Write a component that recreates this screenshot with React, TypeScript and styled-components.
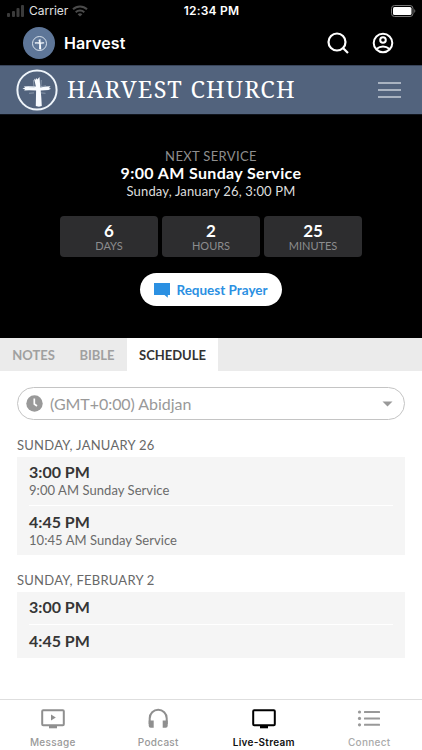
import React from "react";
import styled, { createGlobalStyle } from "styled-components";

const Global = createGlobalStyle`
  * { box-sizing: border-box; }
  body { margin: 0; background: #fff; }
  button { font: inherit; border: 0; margin: 0; padding: 0; background: none; color: inherit; }
  svg { display: block; flex: none; }
`;

type TextProps = {
  $size: number;
  $line: number;
  $color: string;
  $weight?: number;
  $track?: number;
  $system?: boolean;
};

const Text = styled.span<TextProps>`
  display: block;
  white-space: nowrap;
  font-family: ${(p) => (p.$system ? '"Inter"' : '"Lato"')}, "Liberation Sans", sans-serif;
  font-size: ${(p) => p.$size}px;
  line-height: ${(p) => p.$line}px;
  font-weight: ${(p) => p.$weight ?? 400};
  letter-spacing: ${(p) => p.$track ?? 0}px;
  color: ${(p) => p.$color};
`;

const Screen = styled.div`
  width: 422px;
  height: 750px;
  display: flex;
  flex-direction: column;
  overflow: hidden;
  background: #fff;
`;

const StatusBar = styled.div`
  height: 22px;
  flex: none;
  display: grid;
  grid-template-columns: 1fr auto 1fr;
  align-items: center;
  padding: 0 6px 0 7px;
  background: #000;
`;

const Carrier = styled.div`
  display: flex;
  align-items: center;
  gap: 4px;
`;

const BatteryBox = styled.div`
  justify-self: end;
`;

const AppBar = styled.header`
  height: 43px;
  flex: none;
  display: flex;
  align-items: center;
  padding: 0 28px 1px 23px;
  background: #000;
`;

const Avatar = styled.div`
  width: 32px;
  height: 32px;
  margin-right: 9px;
  border-radius: 50%;
  display: grid;
  place-items: center;
  background: #5e7698;
`;

const Actions = styled.div`
  display: flex;
  align-items: center;
  gap: 23px;
  margin-left: auto;
`;

const Banner = styled.div`
  height: 50px;
  flex: none;
  display: flex;
  align-items: center;
  padding: 0 21px 0 16px;
  border-top: 1px solid #38445a;
  border-bottom: 1px solid #10141c;
  background: #52637d;
`;

const ChurchName = styled.div`
  margin-left: 9px;
  padding-bottom: 2px;
  flex: 1;
  font-family: "Noto Serif", "Liberation Serif", serif;
  font-size: 23.5px;
  line-height: 46px;
  letter-spacing: 1.27px;
  white-space: nowrap;
  color: #fff;
`;

const Hero = styled.section`
  height: 223px;
  flex: none;
  display: flex;
  flex-direction: column;
  align-items: center;
  padding-top: 32px;
  background: #000;
`;

const Countdown = styled.div`
  display: grid;
  grid-template-columns: repeat(3, 98px);
  gap: 4px;
  margin: 14px 0 16px;
`;

const Cell = styled.div`
  height: 41px;
  padding-top: 5px;
  border-radius: 4px;
  text-align: center;
  background: #2d2d2f;
`;

const PrayerButton = styled.button`
  width: 142px;
  height: 33px;
  border-radius: 17px;
  display: flex;
  align-items: center;
  justify-content: center;
  gap: 6px;
  background: #fff;
`;

const Tabs = styled.nav`
  height: 33px;
  flex: none;
  display: flex;
  background: #ebebeb;
`;

const Tab = styled.button<{ $width: number; $active?: boolean }>`
  width: ${(p) => p.$width}px;
  padding-top: 2px;
  display: flex;
  justify-content: center;
  align-items: center;
  background: ${(p) => (p.$active ? "#fff" : "transparent")};
`;

const Content = styled.main`
  flex: 1;
  padding: 16px 17px 0;
`;

const ZoneSelect = styled.div`
  height: 33px;
  display: flex;
  align-items: center;
  gap: 7px;
  padding: 0 11px 0 8px;
  border: 1px solid #c4c4c4;
  border-radius: 17px;
  margin-bottom: 17px;
`;

const Caret = styled.svg`
  margin-left: auto;
`;

const Day = styled.section`
  margin-bottom: 17px;
`;

const Slots = styled.div`
  margin-top: 3px;
  padding: 0 12px;
  background: #f5f5f5;
`;

const Slot = styled.div<{ $height: number }>`
  height: ${(p) => p.$height}px;
  padding-top: 5px;
  & + & {
    padding-top: 6px;
    border-top: 1px solid #fff;
  }
`;

const TabBar = styled.nav`
  height: 51px;
  flex: none;
  display: grid;
  grid-template-columns: repeat(4, 1fr);
  border-top: 1px solid #dedede;
`;

const TabItem = styled.button`
  display: flex;
  flex-direction: column;
  align-items: center;
  padding-top: 6px;
  gap: 3px;
`;

function Cross({ size, ring = 2 }: { size: number; ring?: number }) {
  return (
    <svg width={size} height={size} viewBox="0 0 42 42" fill="none">
      <circle cx="21" cy="21" r="19.6" stroke="#eef4fa" strokeWidth={ring} />
      <path d="M18 9.500l1.300 1.500.9-2 1 1.500 2.300-2.500.8 10.500 5.500-1 4.700-.3-1.500 1.800 2 .8-2.500 1.200-7.800.5.600 7 .5 8.400-2.800.8-3.200-.8.300-15.400-7-.2-5 .3 1-1.200-2.600-.8 2.700-1.200-1.500-.8 4.700-.3 7.500.3z" fill="#f8fbff" />
      <path d="M17.400 11l.6 7.500M25.300 11l-.5 7M13 18l5.500.6M25 17.600l5-.8M13 24.300l5-.4M25 23.900l4.500.4" stroke="#c4d0de" strokeWidth=".8" opacity=".6" />
    </svg>
  );
}

function Monitor({ color, play }: { color: string; play?: boolean }) {
  return (
    <svg width="26" height="26" viewBox="0 0 26 26" fill="none">
      <rect x="2.200" y="4.200" width="21.600" height="15" rx="1" stroke={color} strokeWidth="2" />
      <path d="M9 20h8v2.300H9z" fill={color} />
      {play && <path d="M11 8.600v6l4.800-3z" fill={color} />}
    </svg>
  );
}

function Headphones() {
  return (
    <svg width="26" height="26" viewBox="0 0 26 26" fill="none">
      <path d="M4.700 18v-5.700a8.500 8.500 0 0 1 17 0V18" stroke="#8f8f8f" strokeWidth="2" />
      <path d="M3.700 14.500h5v7.300h-3a2 2 0 0 1-2-2zM22.700 14.500h-5v7.300h3a2 2 0 0 0 2-2z" fill="#8f8f8f" />
    </svg>
  );
}

function ListIcon() {
  return (
    <svg width="26" height="26" viewBox="0 0 26 26">
      {[6, 12.4, 18.8].map((y) => (
        <g key={y} fill="#999">
          <circle cx="3.500" cy={y} r="1.600" />
          <rect x="8" y={y - 1} width="16" height="2" rx=".5" />
        </g>
      ))}
    </svg>
  );
}

const countdown = [
  ["6", "DAYS"],
  ["2", "HOURS"],
  ["25", "MINUTES"],
];

type SlotData = { time: string; name?: string; height: number };

const days: { date: string; slots: SlotData[] }[] = [
  {
    date: "SUNDAY, JANUARY 26",
    slots: [
      { time: "3:00 PM", name: "9:00 AM Sunday Service", height: 48 },
      { time: "4:45 PM", name: "10:45 AM Sunday Service", height: 50 },
    ],
  },
  {
    date: "SUNDAY, FEBRUARY 2",
    slots: [
      { time: "3:00 PM", height: 32 },
      { time: "4:45 PM", height: 34 },
    ],
  },
];

export default function App() {
  return (
    <Screen>
      <Global />
      <StatusBar>
        <Carrier>
          <svg width="18" height="12" viewBox="0 0 18 12" fill="#3b3b3b">
            <rect y="8" width="3" height="4" rx="1" />
            <rect x="5" y="6" width="3" height="6" rx="1" />
            <rect x="9.500" y="3" width="3" height="9" rx="1" />
            <rect x="14" y="0" width="3" height="12" rx="1" />
          </svg>
          <Text $system $size={12} $line={22} $color="#e0e0e0">Carrier</Text>
          <svg width="16" height="12" viewBox="0 0 16 12" fill="none" stroke="#4b4b4b" strokeWidth="2">
            <path d="M1 4.300a10 10 0 0 1 14 0M3.700 7.200a6.200 6.200 0 0 1 8.600 0" />
            <path d="M8 11.500L5.600 9.300a3.500 3.500 0 0 1 4.800 0z" fill="#4b4b4b" stroke="none" />
          </svg>
        </Carrier>
        <Text $system $size={12} $line={22} $weight={600} $color="#fff" $track={0.2}>12:34 PM</Text>
        <BatteryBox>
          <svg width="25" height="12" viewBox="0 0 25 12">
            <rect x=".5" y=".5" width="21.500" height="11" rx="3" fill="none" stroke="#777" />
            <rect x="2" y="2" width="18.500" height="8" rx="1.500" fill="#fff" />
            <path d="M23.300 4q2 2 0 4z" fill="#777" />
          </svg>
        </BatteryBox>
      </StatusBar>

      <AppBar>
        <Avatar><Cross size={15} ring={2.4} /></Avatar>
        <Text $system $size={16} $line={42} $weight={600} $color="#fff" $track={0.1}>Harvest</Text>
        <Actions>
          <svg width="22" height="22" viewBox="0 0 22 22" fill="none" stroke="#fff" strokeWidth="2.200">
            <circle cx="10" cy="10" r="8.500" />
            <path d="M16 16l5 5" />
          </svg>
          <svg width="22" height="22" viewBox="0 0 22 22" fill="none" stroke="#fff" strokeWidth="2">
            <circle cx="11" cy="11" r="9.300" />
            <circle cx="11" cy="8" r="2.800" />
            <path d="M4.300 17q6.700-5 13.400 0" />
          </svg>
        </Actions>
      </AppBar>

      <Banner>
        <Cross size={42} />
        <ChurchName>HARVEST CHURCH</ChurchName>
        <svg width="24" height="18" viewBox="0 0 24 18" fill="#a9b3c1">
          <path d="M1 1h23v2H1zM1 8h23v2H1zM1 15h23v2H1z" />
        </svg>
      </Banner>

      <Hero>
        <Text $size={13} $line={18} $color="#8e8e8e" $track={0.35}>NEXT SERVICE</Text>
        <Text $size={16} $line={16} $weight={700} $color="#fff" $track={0.36}>9:00 AM Sunday Service</Text>
        <Text $size={13} $line={21} $color="#dedede" $track={0.16}>Sunday, January 26, 3:00 PM</Text>
        <Countdown>
          {countdown.map(([value, unit]) => (
            <Cell key={unit}>
              <Text $size={17} $line={19} $weight={700} $color="#fff">{value}</Text>
              <Text $size={11} $line={12} $color="#8c8c8e">{unit}</Text>
            </Cell>
          ))}
        </Countdown>
        <PrayerButton>
          <svg width="16" height="16" viewBox="0 0 16 16" fill="#2b90e2">
            <path d="M0 1h16v12h-2.200v2.800L10.500 13H0z" />
          </svg>
          <Text $size={13.5} $line={32} $weight={700} $color="#2b90e2">Request Prayer</Text>
        </PrayerButton>
      </Hero>

      <Tabs>
        <Tab $width={67}><Text $size={13} $line={31} $weight={700} $color="#a0a0a0">NOTES</Text></Tab>
        <Tab $width={60}><Text $size={13} $line={31} $weight={700} $color="#a0a0a0">BIBLE</Text></Tab>
        <Tab $width={91} $active><Text $size={13} $line={31} $weight={700} $color="#333">SCHEDULE</Text></Tab>
      </Tabs>

      <Content>
        <ZoneSelect>
          <svg width="17" height="17" viewBox="0 0 17 17" fill="none">
            <circle cx="8.500" cy="8.500" r="8.200" fill="#999" />
            <path d="M8.300 3.500v5.500l2.700 2" stroke="#fff" strokeWidth="1.700" />
          </svg>
          <Text $size={16} $line={31} $color="#999" $track={-0.05}>(GMT+0:00) Abidjan</Text>
          <Caret width="11" height="6" viewBox="0 0 11 6"><path d="M.5.500h10L5.500 5.500z" fill="#999" /></Caret>
        </ZoneSelect>
        {days.map((day) => (
          <Day key={day.date}>
            <Text $size={13} $line={17} $color="#686868" $track={0.25}>{day.date}</Text>
            <Slots>
              {day.slots.map((slot) => (
                <Slot key={slot.time} $height={slot.height}>
                  <Text $size={16} $line={20} $weight={700} $color="#363636">{slot.time}</Text>
                  {slot.name && <Text $size={13} $line={16} $color="#6a6a6a" $track={0.06}>{slot.name}</Text>}
                </Slot>
              ))}
            </Slots>
          </Day>
        ))}
      </Content>

      <TabBar>
        <TabItem><Monitor color="#8f8f8f" play /><Text $system $size={10} $line={14} $weight={500} $color="#999" $track={0.3}>Message</Text></TabItem>
        <TabItem><Headphones /><Text $system $size={10} $line={14} $weight={500} $color="#999" $track={0.3}>Podcast</Text></TabItem>
        <TabItem><Monitor color="#000" /><Text $system $size={10} $line={14} $weight={600} $color="#111" $track={0.25}>Live-Stream</Text></TabItem>
        <TabItem><ListIcon /><Text $system $size={10} $line={14} $weight={500} $color="#aaa" $track={0.3}>Connect</Text></TabItem>
      </TabBar>
    </Screen>
  );
}
